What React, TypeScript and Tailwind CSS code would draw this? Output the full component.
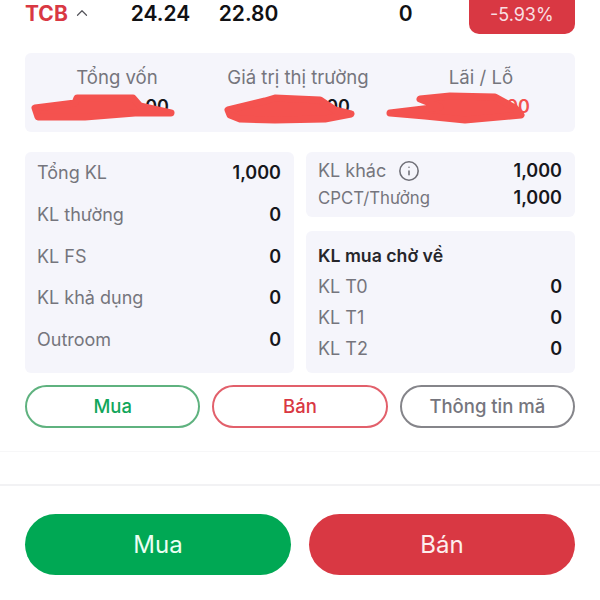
import React from "react";
import { ChevronUp, Info } from "lucide-react";

const font = "font-['Inter','Noto_Sans',sans-serif]";

const Row = ({ label, value, className = "" }: { label: React.ReactNode; value: string; className?: string }) => (
  <div className={`flex items-center justify-between ${className}`}>
    <span className="text-[18px] leading-[24px] text-[#75757d]">{label}</span>
    <span className="text-[18px] leading-[24px] font-semibold text-[#17171c]">{value}</span>
  </div>
);

const App: React.FC = () => {
  return (
    <div className={`w-[600px] h-[600px] overflow-hidden bg-white ${font}`}>
      <div className="flex h-[34px] items-start px-[25px] text-[21px] leading-[28px]">
        <span className="font-bold text-[#d93843]">TCB</span>
        <ChevronUp className="ml-[5px] mt-[4px] h-[18px] w-[18px] text-[#55555c]" strokeWidth={1.6} />
        <span className="ml-[40px] w-[88px] font-semibold text-[#111114]">24.24</span>
        <span className="w-[180px] font-semibold text-[#111114]">22.80</span>
        <span className="w-[70px] font-semibold text-[#111114]">0</span>
        <div className="h-[34px] w-[106px] rounded-b-[10px] bg-[#d93843] text-center text-[18px] leading-[30px] text-[#f8dfe1]">
          -5.93%
        </div>
      </div>

      <div className="relative mx-[25px] mt-[19px] grid h-[79px] grid-cols-[184px_178px_188px] rounded-[6px] bg-[#f5f5fb] pt-[12px] text-center text-[18.6px] leading-[24px] text-[#75757d]">
        <div>
          Tổng vốn
          <div className="mt-[6px] pl-[80px] text-[18px] font-semibold text-[#17171c]">00</div>
        </div>
        <div>
          Giá trị thị trường
          <div className="mt-[6px] pl-[80px] text-[18px] font-semibold text-[#17171c]">00</div>
        </div>
        <div>
          Lãi / Lỗ
          <div className="mt-[6px] pl-[74px] text-[18px] font-semibold text-[#f4524f]">00</div>
        </div>
        {/* red marker scribbled over the amounts */}
        <svg className="absolute left-0 top-0 h-[79px] w-[550px]" viewBox="0 0 550 79" fill="#f4524f" stroke="#f4524f" strokeWidth="7" strokeLinejoin="round">
          <path d="M10 55 L50 50 L52 45 L108 45 L115 53 L146 60 L110 60 L60 64 L13 64 Z" />
          <path d="M203 57 L240 48 L250 45 L295 47 L310 57 L326 61 L300 66 L250 67 L215 66 L205 62 Z" />
          <path d="M365 60 L415 54 L395 46 L425 43 L470 44 L490 55 L496 62 L440 67 L400 63 Z" />
        </svg>
      </div>

      <div className="mx-[25px] mt-[20px] flex gap-[12px]">
        <div className="flex h-[221px] w-[269px] flex-col gap-[17.75px] rounded-[6px] bg-[#f5f5fb] pl-[12px] pr-[13px] pt-[9px]">
          <Row label="Tổng KL" value="1,000" />
          <Row label="KL thường" value="0" />
          <Row label="KL FS" value="0" />
          <Row label="KL khả dụng" value="0" />
          <Row label="Outroom" value="0" />
        </div>
        <div className="flex w-[269px] flex-col gap-[14px]">
          <div className="flex h-[65px] flex-col gap-[3px] rounded-[6px] bg-[#f5f5fb] pl-[12px] pr-[13px] pt-[7px]">
            <Row
              label={
                <span className="flex items-center gap-[12px]">
                  KL khác <Info className="h-[22px] w-[22px] text-[#6f6f77]" strokeWidth={1.7} />
                </span>
              }
              value="1,000"
            />
            <div className="flex items-center justify-between">
              <span className="text-[16.8px] leading-[24px] text-[#75757d]">CPCT/Thưởng</span>
              <span className="text-[18px] leading-[24px] font-semibold text-[#17171c]">1,000</span>
            </div>
          </div>
          <div className="flex h-[142px] flex-col gap-[7px] rounded-[6px] bg-[#f5f5fb] pl-[12px] pr-[13px] pt-[13px]">
            <div className="text-[17.7px] leading-[24px] font-semibold text-[#26262b]">KL mua chờ về</div>
            <Row label="KL T0" value="0" />
            <Row label="KL T1" value="0" />
            <Row label="KL T2" value="0" />
          </div>
        </div>
      </div>

      <div className="mx-[25px] mt-[12px] grid grid-cols-3 gap-[12px]">
        <button className="h-[43px] rounded-full border-2 border-[#5fb27f] text-[18.5px] font-medium text-[#12a65b]">Mua</button>
        <button className="h-[43px] rounded-full border-2 border-[#e2606b] text-[18.5px] font-medium text-[#d93843]">Bán</button>
        <button className="h-[43px] rounded-full border-2 border-[#85858a] text-[18.5px] font-medium text-[#75757d]">Thông tin mã</button>
      </div>

      <div className="mt-[23px] h-[1px] bg-[#f7f7f8]" />
      <div className="mt-[32px] h-[2px] bg-[#f2f2f4]" />

      <div className="mx-[25px] mt-[28px] flex gap-[18px]">
        <button className="h-[61px] flex-1 rounded-full bg-[#00a854] text-[24px] text-[#eafff2]">Mua</button>
        <button className="h-[61px] flex-1 rounded-full bg-[#d93843] text-[24px] text-[#fdeeee]">Bán</button>
      </div>
    </div>
  );
};

export default App;
